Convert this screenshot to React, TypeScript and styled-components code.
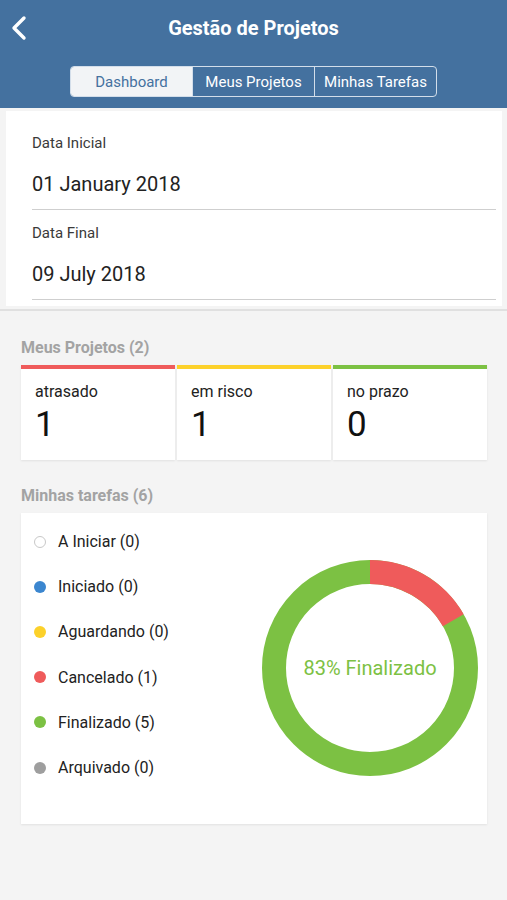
import React from 'react';
import styled, { createGlobalStyle } from 'styled-components';

const GlobalStyle = createGlobalStyle`
  body {
    margin: 0;
    background: #f4f4f4;
    font-family: Roboto, 'Liberation Sans', sans-serif;
  }
`;

const colors = {
  header: '#44719f',
  red: '#ef5b5b',
  yellow: '#fcd12a',
  green: '#7cc143',
  blue: '#3b86cf',
  grey: '#9e9e9e',
};

const projects = [
  { label: 'atrasado', value: 1, color: colors.red },
  { label: 'em risco', value: 1, color: colors.yellow },
  { label: 'no prazo', value: 0, color: colors.green },
];

const tasks = [
  { label: 'A Iniciar (0)', color: '#fff', outline: true },
  { label: 'Iniciado (0)', color: colors.blue },
  { label: 'Aguardando (0)', color: colors.yellow },
  { label: 'Cancelado (1)', color: colors.red },
  { label: 'Finalizado (5)', color: colors.green },
  { label: 'Arquivado (0)', color: colors.grey },
];

const Donut = () => {
  const r = 96;
  const c = 2 * Math.PI * r;
  const red = c / 6;
  return (
    <DonutBox>
      <svg width="220" height="220" viewBox="0 0 220 220">
        <circle cx="110" cy="110" r={r} fill="none" stroke={colors.green} strokeWidth="24" />
        <circle
          cx="110"
          cy="110"
          r={r}
          fill="none"
          stroke={colors.red}
          strokeWidth="24"
          strokeDasharray={`${red} ${c}`}
          transform="rotate(-90 110 110)"
        />
      </svg>
      <DonutLabel>83% Finalizado</DonutLabel>
    </DonutBox>
  );
};

export default function App() {
  return (
    <>
      <GlobalStyle />
      <Top>
        <Header>
          <TitleRow>
            <BackButton>
              <svg width="20" height="26" viewBox="0 0 20 26">
                <polyline points="15,3 5,13 15,23" fill="none" stroke="#fff" strokeWidth="3.4" strokeLinecap="round" strokeLinejoin="round" />
              </svg>
            </BackButton>
            <Title>Gestão de Projetos</Title>
          </TitleRow>
          <Tabs>
            <Tab active>Dashboard</Tab>
            <Tab>Meus Projetos</Tab>
            <Tab>Minhas Tarefas</Tab>
          </Tabs>
        </Header>
        <DateCard>
          <Field>
            <FieldLabel>Data Inicial</FieldLabel>
            <FieldValue>01 January 2018</FieldValue>
          </Field>
          <Field>
            <FieldLabel>Data Final</FieldLabel>
            <FieldValue>09 July 2018</FieldValue>
          </Field>
        </DateCard>
      </Top>

      <Section>
        <SectionTitle>Meus Projetos (2)</SectionTitle>
        <ProjectGrid>
          {projects.map((p) => (
            <ProjectCard key={p.label} bar={p.color}>
              <ProjectLabel>{p.label}</ProjectLabel>
              <ProjectValue>{p.value}</ProjectValue>
            </ProjectCard>
          ))}
        </ProjectGrid>

        <SectionTitle>Minhas tarefas (6)</SectionTitle>
        <TaskCard>
          <Legend>
            {tasks.map((t) => (
              <LegendItem key={t.label}>
                <Dot color={t.color} outline={t.outline} />
                {t.label}
              </LegendItem>
            ))}
          </Legend>
          <Donut />
        </TaskCard>
      </Section>
    </>
  );
}

const Top = styled.div`
  border-bottom: 2px solid #e0e0e0;
  padding-bottom: 3px;
`;

const Header = styled.header`
  background: ${colors.header};
  height: 108px;
  box-sizing: border-box;
  display: flex;
  flex-direction: column;
  align-items: center;
`;

const TitleRow = styled.div`
  position: relative;
  width: 100%;
  height: 56px;
  display: flex;
  align-items: center;
  justify-content: center;
`;

const BackButton = styled.div`
  position: absolute;
  left: 9px;
  top: 15px;
  display: flex;
`;

const Title = styled.h1`
  margin: 0;
  color: #fff;
  font-size: 20px;
  font-weight: 700;
`;

const Tabs = styled.div`
  margin-top: 10px;
  display: flex;
  border: 1px solid #d3deea;
  border-radius: 4px;
  overflow: hidden;
`;

const Tab = styled.div<{ active?: boolean }>`
  width: 121px;
  height: 29px;
  display: flex;
  align-items: center;
  justify-content: center;
  font-size: 15px;
  color: ${(p) => (p.active ? colors.header : '#fff')};
  background: ${(p) => (p.active ? '#f2f4f6' : 'transparent')};
  & + & {
    border-left: 1px solid #d3deea;
  }
`;

const DateCard = styled.div`
  margin: 3px 5px 0 6px;
  background: #fff;
  padding: 0 6px 6px 26px;
`;

const Field = styled.div`
  padding-top: 22px;
  border-bottom: 1px solid #cfcfcf;
  padding-bottom: 13px;
  & + & {
    padding-top: 13px;
  }
`;

const FieldLabel = styled.div`
  font-size: 15px;
  line-height: 20px;
  color: #3a3a3a;
`;

const FieldValue = styled.div`
  margin-top: 19px;
  font-size: 20px;
  line-height: 24px;
  color: #222;
`;

const Section = styled.div`
  padding: 27px 20px 40px 21px;
`;

const SectionTitle = styled.h2`
  margin: 0 0 7px;
  font-size: 16px;
  line-height: 20px;
  font-weight: 700;
  color: #a3a3a3;
`;

const ProjectGrid = styled.div`
  display: grid;
  grid-template-columns: repeat(3, 1fr);
  gap: 2px;
  margin-bottom: 26px;
`;

const ProjectCard = styled.div<{ bar: string }>`
  background: #fff;
  border-top: 4px solid ${(p) => p.bar};
  padding: 13px 14px 0;
  box-sizing: border-box;
  box-shadow: 0 1px 2px rgba(0, 0, 0, 0.08);
  height: 95px;
`;

const ProjectLabel = styled.div`
  font-size: 16px;
  line-height: 20px;
  color: #222;
`;

const ProjectValue = styled.div`
  margin-top: 3px;
  font-size: 35px;
  line-height: 40px;
  color: #111;
`;

const TaskCard = styled.div`
  background: #fff;
  height: 311px;
  box-sizing: border-box;
  box-shadow: 0 1px 2px rgba(0, 0, 0, 0.08);
  display: flex;
  justify-content: space-between;
  padding: 6px 7px 0 13px;
`;

const Legend = styled.ul`
  list-style: none;
  margin: 0;
  padding: 0;
`;

const LegendItem = styled.li`
  height: 45.2px;
  display: flex;
  align-items: center;
  gap: 12px;
  font-size: 16px;
  color: #222;
`;

const Dot = styled.span<{ color: string; outline?: boolean }>`
  width: 12px;
  height: 12px;
  border-radius: 50%;
  box-sizing: border-box;
  background: ${(p) => p.color};
  border: ${(p) => (p.outline ? '1px solid #c8c8c8' : 'none')};
`;

const DonutBox = styled.div`
  position: relative;
  margin-top: 39px;
  width: 220px;
  height: 220px;
`;

const DonutLabel = styled.div`
  position: absolute;
  inset: 0;
  display: flex;
  align-items: center;
  justify-content: center;
  font-size: 20px;
  color: ${colors.green};
`;
